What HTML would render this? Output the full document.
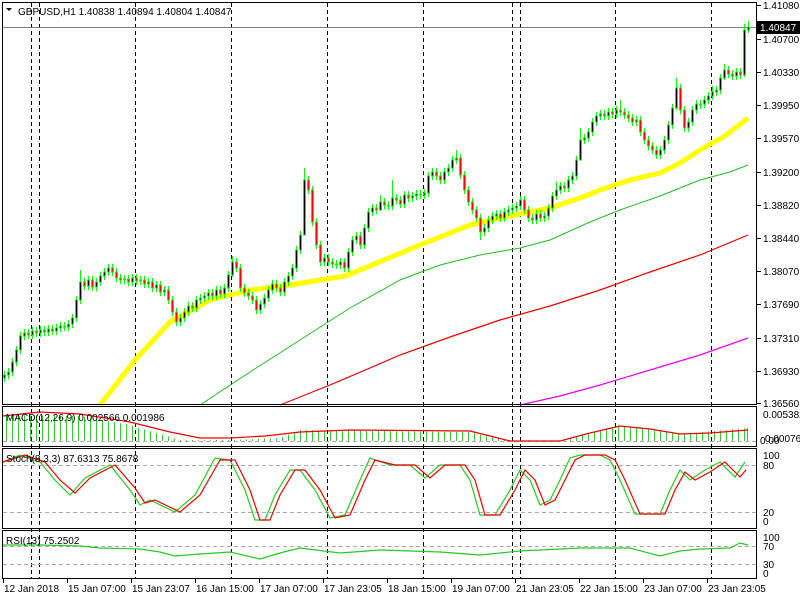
<!DOCTYPE html>
<html><head><meta charset="utf-8"><style>
html,body{margin:0;padding:0;background:#fff;width:800px;height:600px;overflow:hidden}
svg{display:block}
text{font-family:"Liberation Sans",sans-serif;font-size:10px;fill:#000}
</style></head><body>
<svg width="800" height="600" xmlns="http://www.w3.org/2000/svg">
<rect width="800" height="600" fill="#fff"/>
<!-- dashed verticals -->
<g stroke="#000" stroke-dasharray="4,3">
<path d="M31.5 3V579M39.5 3V579M135.5 3V579M231.5 3V579M327.5 3V579M423.5 3V579M512.5 3V579M520.5 3V579M615.5 3V579M711.5 3V579"/>
</g>
<line x1="3" y1="27.5" x2="757" y2="27.5" stroke="#808080"/>
<!-- MAs -->
<polyline fill="none" stroke="#ffff00" stroke-width="5" stroke-linejoin="round" points="100,405 135,360 170,322 210,300 250,290 290,285 320,280 345,276 360,270 420,245 470,225 510,216 550,208 580,198 600,190 630,180 660,173 680,163 700,150 725,136 748,118"/>
<polyline fill="none" stroke="#22bb22" stroke-width="1" points="200,405 250,372 300,340 350,308 400,280 440,265 480,255 520,248 550,240 590,222 620,210 660,196 700,180 730,172 748,165"/>
<polyline fill="none" stroke="#ee0000" stroke-width="1.2" points="280,405 330,385 370,368 400,355 450,337 500,320 550,306 600,290 650,272 700,255 748,235"/>
<polyline fill="none" stroke="#ee00ee" stroke-width="1.2" points="520,405 560,396 600,385 650,370 700,355 748,338"/>
<!-- candle wicks -->
<path fill="none" stroke="#00ff00" d="M4.5 371v11M8.5 368v11M12.5 358v18M16.5 346v20M20.5 332v22M24.5 329v11M32.5 327v12M40.5 326v11M48.5 325v11M56.5 324v11M60.5 322v10M68.5 320v11M72.5 314v14M76.5 296v26M80.5 270v34M88.5 276v14M96.5 278v13M100.5 272v14M104.5 268v12M108.5 264v12M124.5 275v9M132.5 274v12M140.5 276v9M148.5 278v10M156.5 281v11M164.5 286v10M180.5 314v12M184.5 308v14M188.5 302v14M196.5 296v16M200.5 294v10M204.5 292v10M208.5 289v11M216.5 286v14M224.5 284v14M228.5 271v21M232.5 256v21M260.5 300v14M264.5 294v14M268.5 286v16M272.5 280v14M284.5 278v18M288.5 272v14M292.5 264v16M296.5 246v26M300.5 231v23M304.5 168v67M324.5 254v12M340.5 258v11M348.5 248v24M352.5 236v20M356.5 232v12M364.5 224v25M368.5 208v24M372.5 204v12M380.5 195v16M392.5 180v30M404.5 191v17M412.5 192v10M416.5 190v10M424.5 189v10M428.5 172v25M432.5 168v12M444.5 168v16M448.5 164v12M452.5 156v16M456.5 150v14M484.5 224v12M488.5 216v16M492.5 212v12M496.5 210v10M504.5 208v14M508.5 206v10M512.5 204v10M516.5 202v10M520.5 196v14M536.5 210v14M544.5 212v10M548.5 204v16M552.5 192v20M556.5 182v18M560.5 182v12M568.5 176v16M572.5 172v12M576.5 156v24M580.5 128v32M584.5 134v10M588.5 128v14M592.5 118v18M596.5 112v14M600.5 110v10M608.5 108v12M616.5 106v12M636.5 116v10M660.5 146v13M664.5 136v18M668.5 121v23M672.5 104v25M676.5 78v32M688.5 118v14M692.5 106v20M696.5 100v14M700.5 100v9M704.5 96v12M708.5 92v12M712.5 86v14M716.5 86v10M720.5 74v20M724.5 64v16M736.5 68v12M744.5 24v53M748.5 21v12
M28.5 329v10M36.5 327v10M44.5 326v10M52.5 325v10M64.5 322v9M84.5 278v12M92.5 276v15M112.5 264v12M116.5 268v14M120.5 274v10M128.5 275v11M136.5 274v11M144.5 276v12M152.5 278v14M160.5 281v15M168.5 286v18M172.5 296v20M176.5 308v18M192.5 302v10M212.5 289v11M220.5 286v12M236.5 258v14M240.5 264v28M244.5 284v13M248.5 289v11M252.5 292v12M256.5 296v18M276.5 280v12M280.5 284v12M308.5 176v18M312.5 186v40M316.5 218v31M320.5 241v25M328.5 254v12M332.5 258v10M336.5 260v9M344.5 258v14M360.5 232v17M376.5 204v10M384.5 198v11M388.5 201v9M396.5 194v10M400.5 196v12M408.5 191v11M420.5 190v9M436.5 168v12M440.5 172v12M460.5 154v25M464.5 171v23M468.5 186v20M472.5 198v16M476.5 206v16M480.5 214v26M500.5 210v12M524.5 196v18M528.5 206v16M532.5 214v10M540.5 210v12M564.5 182v10M604.5 110v10M612.5 108v10M620.5 100v16M624.5 108v11M628.5 111v11M632.5 114v12M640.5 116v20M644.5 128v16M648.5 136v14M652.5 142v12M656.5 146v13M680.5 84v30M684.5 106v26M728.5 66v12M732.5 70v10M740.5 68v11"/>
<!-- bull bodies -->
<path fill="#000" stroke="#00ff00" d="M3.5 375h2v3h-2zM7.5 372h2v3h-2zM11.5 362h2v10h-2zM15.5 350h2v12h-2zM19.5 336h2v14h-2zM23.5 333h2v3h-2zM31.5 331h2v4h-2zM39.5 330h2v3h-2zM47.5 329h2v3h-2zM55.5 328h2v3h-2zM59.5 326h2v2h-2zM67.5 324h2v3h-2zM71.5 318h2v6h-2zM75.5 300h2v18h-2zM79.5 282h2v18h-2zM87.5 280h2v6h-2zM95.5 282h2v5h-2zM99.5 276h2v6h-2zM103.5 272h2v4h-2zM107.5 268h2v4h-2zM123.5 279h2v1h-2zM131.5 278h2v4h-2zM139.5 280h2v1h-2zM147.5 282h2v2h-2zM155.5 285h2v3h-2zM163.5 290h2v2h-2zM179.5 318h2v4h-2zM183.5 312h2v6h-2zM187.5 306h2v6h-2zM195.5 300h2v8h-2zM199.5 298h2v2h-2zM203.5 296h2v2h-2zM207.5 293h2v3h-2zM215.5 290h2v6h-2zM223.5 288h2v6h-2zM227.5 275h2v13h-2zM231.5 262h2v13h-2zM259.5 304h2v6h-2zM263.5 298h2v6h-2zM267.5 290h2v8h-2zM271.5 284h2v6h-2zM283.5 282h2v10h-2zM287.5 276h2v6h-2zM291.5 268h2v8h-2zM295.5 250h2v18h-2zM299.5 235h2v15h-2zM303.5 180h2v55h-2zM323.5 258h2v4h-2zM339.5 262h2v3h-2zM347.5 252h2v16h-2zM351.5 240h2v12h-2zM355.5 236h2v4h-2zM363.5 228h2v17h-2zM367.5 212h2v16h-2zM371.5 208h2v4h-2zM379.5 202h2v8h-2zM391.5 198h2v8h-2zM403.5 195h2v9h-2zM411.5 196h2v2h-2zM415.5 194h2v2h-2zM423.5 193h2v2h-2zM427.5 176h2v17h-2zM431.5 172h2v4h-2zM443.5 172h2v8h-2zM447.5 168h2v4h-2zM451.5 160h2v8h-2zM455.5 158h2v2h-2zM483.5 228h2v4h-2zM487.5 220h2v8h-2zM491.5 216h2v4h-2zM495.5 214h2v2h-2zM503.5 212h2v6h-2zM507.5 210h2v2h-2zM511.5 208h2v2h-2zM515.5 206h2v2h-2zM519.5 200h2v6h-2zM535.5 214h2v6h-2zM543.5 216h2v2h-2zM547.5 208h2v8h-2zM551.5 196h2v12h-2zM555.5 190h2v6h-2zM559.5 186h2v4h-2zM567.5 180h2v8h-2zM571.5 176h2v4h-2zM575.5 160h2v16h-2zM579.5 140h2v20h-2zM583.5 138h2v2h-2zM587.5 132h2v6h-2zM591.5 122h2v10h-2zM595.5 116h2v6h-2zM599.5 114h2v2h-2zM607.5 112h2v4h-2zM615.5 110h2v4h-2zM635.5 120h2v2h-2zM659.5 150h2v5h-2zM663.5 140h2v10h-2zM667.5 125h2v15h-2zM671.5 108h2v17h-2zM675.5 88h2v20h-2zM687.5 122h2v6h-2zM691.5 110h2v12h-2zM695.5 104h2v6h-2zM699.5 104h2v1h-2zM703.5 100h2v4h-2zM707.5 96h2v4h-2zM711.5 92h2v4h-2zM715.5 90h2v2h-2zM719.5 78h2v12h-2zM723.5 70h2v8h-2zM735.5 72h2v4h-2zM743.5 30h2v45h-2zM747.5 27h2v3h-2z"/>
<!-- bear bodies -->
<path fill="#ff0000" stroke="#00ff00" d="M27.5 333h2v2h-2zM35.5 331h2v2h-2zM43.5 330h2v2h-2zM51.5 329h2v2h-2zM63.5 326h2v1h-2zM83.5 282h2v4h-2zM91.5 280h2v7h-2zM111.5 268h2v4h-2zM115.5 272h2v6h-2zM119.5 278h2v2h-2zM127.5 279h2v3h-2zM135.5 278h2v3h-2zM143.5 280h2v4h-2zM151.5 282h2v6h-2zM159.5 285h2v7h-2zM167.5 290h2v10h-2zM171.5 300h2v12h-2zM175.5 312h2v10h-2zM191.5 306h2v2h-2zM211.5 293h2v3h-2zM219.5 290h2v4h-2zM235.5 262h2v6h-2zM239.5 268h2v20h-2zM243.5 288h2v5h-2zM247.5 293h2v3h-2zM251.5 296h2v4h-2zM255.5 300h2v10h-2zM275.5 284h2v4h-2zM279.5 288h2v4h-2zM307.5 180h2v10h-2zM311.5 190h2v32h-2zM315.5 222h2v23h-2zM319.5 245h2v17h-2zM327.5 258h2v4h-2zM331.5 262h2v2h-2zM335.5 264h2v1h-2zM343.5 262h2v6h-2zM359.5 236h2v9h-2zM375.5 208h2v2h-2zM383.5 202h2v3h-2zM387.5 205h2v1h-2zM395.5 198h2v2h-2zM399.5 200h2v4h-2zM407.5 195h2v3h-2zM419.5 194h2v1h-2zM435.5 172h2v4h-2zM439.5 176h2v4h-2zM459.5 158h2v17h-2zM463.5 175h2v15h-2zM467.5 190h2v12h-2zM471.5 202h2v8h-2zM475.5 210h2v8h-2zM479.5 218h2v14h-2zM499.5 214h2v4h-2zM523.5 200h2v10h-2zM527.5 210h2v8h-2zM531.5 218h2v2h-2zM539.5 214h2v4h-2zM563.5 186h2v2h-2zM603.5 114h2v2h-2zM611.5 112h2v2h-2zM619.5 110h2v2h-2zM623.5 112h2v3h-2zM627.5 115h2v3h-2zM631.5 118h2v4h-2zM639.5 120h2v12h-2zM643.5 132h2v8h-2zM647.5 140h2v6h-2zM651.5 146h2v4h-2zM655.5 150h2v5h-2zM679.5 88h2v22h-2zM683.5 110h2v18h-2zM727.5 70h2v4h-2zM731.5 74h2v2h-2zM739.5 72h2v3h-2z"/>
<!-- MACD histogram -->
<clipPath id="mc"><polygon points="3,441 3,415 80,416 130,425 180,440 230,440 280,438 300,430 470,432 510,441 560,441 620,425 680,434 748,428 748,441"/></clipPath>
<path clip-path="url(#mc)" stroke="#33cc33" d="M6.5 407V441M12.5 407V441M18.5 407V441M24.5 407V441M30.5 407V441M36.5 407V441M42.5 407V441M48.5 407V441M54.5 407V441M60.5 407V441M66.5 407V441M72.5 407V441M78.5 407V441M84.5 407V441M90.5 407V441M96.5 407V441M102.5 407V441M108.5 407V441M114.5 407V441M120.5 407V441M126.5 407V441M132.5 407V441M138.5 407V441M144.5 407V441M150.5 407V441M156.5 407V441M162.5 407V441M168.5 407V441M174.5 407V441M180.5 407V441M186.5 407V441M192.5 407V441M198.5 407V441M204.5 407V441M210.5 407V441M216.5 407V441M222.5 407V441M228.5 407V441M234.5 407V441M240.5 407V441M246.5 407V441M252.5 407V441M258.5 407V441M264.5 407V441M270.5 407V441M276.5 407V441M282.5 407V441M288.5 407V441M294.5 407V441M300.5 407V441M306.5 407V441M312.5 407V441M318.5 407V441M324.5 407V441M330.5 407V441M336.5 407V441M342.5 407V441M348.5 407V441M354.5 407V441M360.5 407V441M366.5 407V441M372.5 407V441M378.5 407V441M384.5 407V441M390.5 407V441M396.5 407V441M402.5 407V441M408.5 407V441M414.5 407V441M420.5 407V441M426.5 407V441M432.5 407V441M438.5 407V441M444.5 407V441M450.5 407V441M456.5 407V441M462.5 407V441M468.5 407V441M474.5 407V441M480.5 407V441M486.5 407V441M492.5 407V441M498.5 407V441M504.5 407V441M510.5 407V441M516.5 407V441M522.5 407V441M528.5 407V441M534.5 407V441M540.5 407V441M546.5 407V441M552.5 407V441M558.5 407V441M564.5 407V441M570.5 407V441M576.5 407V441M582.5 407V441M588.5 407V441M594.5 407V441M600.5 407V441M606.5 407V441M612.5 407V441M618.5 407V441M624.5 407V441M630.5 407V441M636.5 407V441M642.5 407V441M648.5 407V441M654.5 407V441M660.5 407V441M666.5 407V441M672.5 407V441M678.5 407V441M684.5 407V441M690.5 407V441M696.5 407V441M702.5 407V441M708.5 407V441M714.5 407V441M720.5 407V441M726.5 407V441M732.5 407V441M738.5 407V441M744.5 407V441M747.5 407V441"/>
<line x1="3" y1="441.5" x2="757" y2="441.5" stroke="#aaa" stroke-dasharray="4,3"/>
<polyline fill="none" stroke="#ee0000" stroke-width="1.2" points="3,416 40,412 80,414 130,422 170,432 200,438 230,438 265,436 300,432 350,430 470,431 490,436 510,441 560,441 590,433 620,426 650,429 680,434 710,433 748,430"/>
<!-- Stoch / RSI levels -->
<path stroke="#aaa" stroke-dasharray="4,3" d="M3 465.5H757M3 512.5H757M3 546.5H757M3 564.5H757"/>
<polyline fill="none" stroke="#22cc22" stroke-width="1.2" points="3,462 20,455 40,462 55,480 70,495 85,478 110,465 130,490 140,505 150,500 175,512 195,495 215,458 230,460 245,490 255,520 265,520 275,495 290,470 300,470 315,490 330,518 345,515 360,480 370,458 390,465 410,465 425,478 440,465 460,465 470,480 480,515 495,515 510,490 520,470 530,480 540,505 550,500 560,480 570,458 580,455 600,455 610,460 620,480 635,514 660,514 670,490 680,470 690,480 705,470 720,462 735,477 745,462"/>
<polyline fill="none" stroke="#ee0000" stroke-width="1.2" points="3,462 25,455 45,462 60,480 75,493 90,478 115,465 135,488 145,503 155,500 180,512 200,495 220,460 235,460 250,490 260,520 270,520 280,495 295,470 305,470 320,490 335,518 350,515 365,480 375,460 395,465 415,465 430,478 445,465 465,465 475,480 485,515 500,515 515,490 525,470 535,480 545,505 555,500 565,480 575,460 585,455 605,455 615,460 625,480 640,514 665,514 675,490 685,472 695,480 710,472 725,462 740,477 746,470"/>
<polyline fill="none" stroke="#22cc22" stroke-width="1.2" points="3,545 40,545 80,546 100,548 140,549 160,552 175,556 200,554 230,552 260,559 280,553 300,548 340,553 380,550 440,552 480,555 520,551 580,548 630,548 660,556 680,551 700,549 730,548 740,543 748,545"/>
<!-- panel borders -->
<g fill="none" stroke="#000">
<rect x="2.5" y="2.5" width="754" height="402"/>
<rect x="2.5" y="406.5" width="754" height="40"/>
<rect x="2.5" y="448.5" width="754" height="80"/>
<rect x="2.5" y="530.5" width="754" height="48"/>
</g>
<!-- price axis -->
<path stroke="#000" d="M757 5.5h4M757 39.5h4M757 72.5h4M757 105.5h4M757 138.5h4M757 172.5h4M757 205.5h4M757 238.5h4M757 271.5h4M757 304.5h4M757 338.5h4M757 371.5h4M757 403.5h4"/>
<text x="763" y="9">1.41080</text>
<text x="763" y="43">1.40700</text>
<text x="763" y="76">1.40330</text>
<text x="763" y="109">1.39950</text>
<text x="763" y="142">1.39570</text>
<text x="763" y="176">1.39200</text>
<text x="763" y="209">1.38820</text>
<text x="763" y="242">1.38440</text>
<text x="763" y="275">1.38070</text>
<text x="763" y="308">1.37690</text>
<text x="763" y="342">1.37310</text>
<text x="763" y="375">1.36930</text>
<text x="763" y="407">1.36560</text>
<rect x="757" y="21" width="43" height="13" fill="#000"/>
<text x="760" y="31" style="fill:#fff">1.40847</text>
<text x="763" y="418">0.005382</text>
<text x="760" y="444">0.00</text><text x="765" y="442">0.000765</text>
<text x="763" y="459">100</text><text x="763" y="469">80</text><text x="763" y="516">20</text><text x="763" y="525">0</text>
<text x="763" y="541">100</text><text x="763" y="550">70</text><text x="763" y="568">30</text><text x="763" y="577">0</text>
<!-- time axis -->
<path stroke="#000" d="M3.5 579v4M67.5 579v4M131.5 579v4M195.5 579v4M259.5 579v4M323.5 579v4M387.5 579v4M451.5 579v4M515.5 579v4M579.5 579v4M643.5 579v4M707.5 579v4"/>
<text x="4" y="592">12 Jan 2018</text>
<text x="68" y="592">15 Jan 07:00</text>
<text x="132" y="592">15 Jan 23:07</text>
<text x="196" y="592">16 Jan 15:00</text>
<text x="260" y="592">17 Jan 07:00</text>
<text x="324" y="592">17 Jan 23:05</text>
<text x="388" y="592">18 Jan 15:00</text>
<text x="452" y="592">19 Jan 07:00</text>
<text x="516" y="592">21 Jan 23:05</text>
<text x="580" y="592">22 Jan 15:00</text>
<text x="644" y="592">23 Jan 07:00</text>
<text x="708" y="592">23 Jan 23:05</text>
<!-- labels -->
<path d="M6 8 L12 8 L9 11Z" fill="#000"/>
<text x="18" y="15">GBPUSD,H1  1.40838 1.40894 1.40804 1.40847</text>
<text x="6" y="421">MACD(12,26,9) 0.002566 0.001986</text>
<text x="6" y="462">Stoch(8,3,3) 87.6313 75.8678</text>
<text x="6" y="544">RSI(13) 75.2502</text>
</svg>
</body></html>
